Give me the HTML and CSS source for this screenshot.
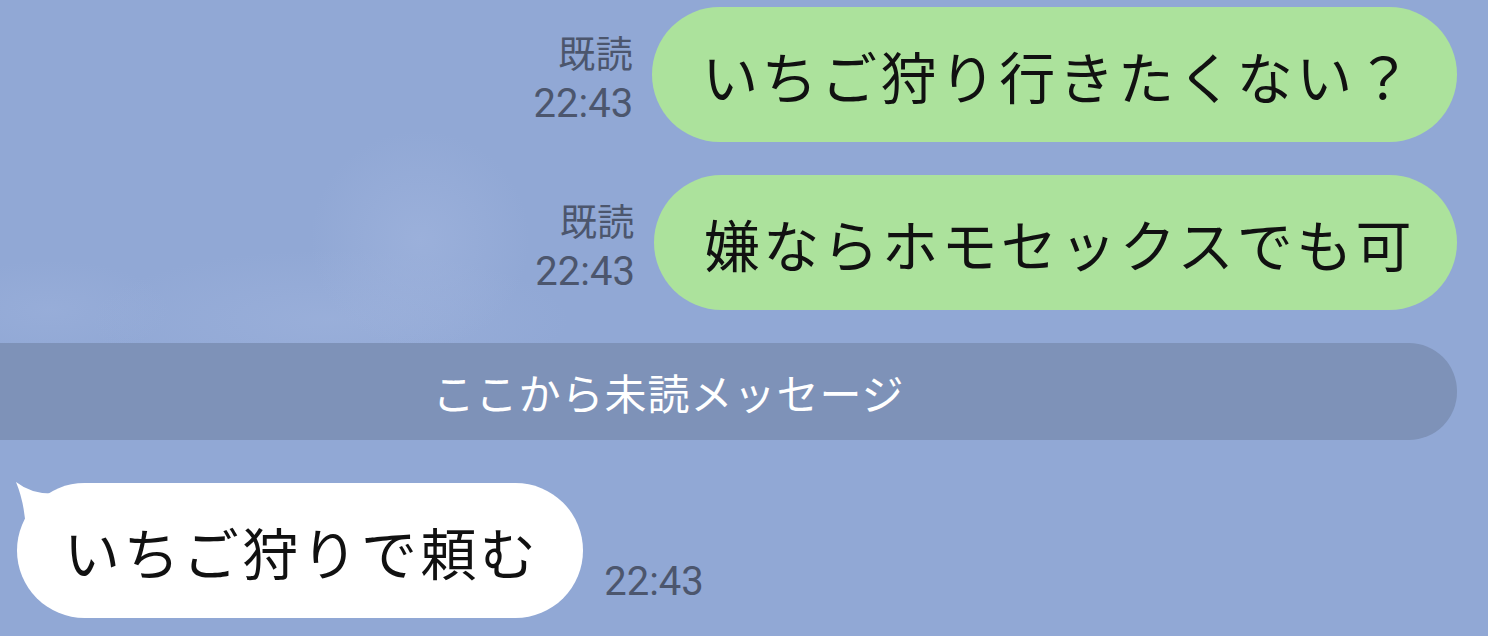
FILE: index.html
```html
<!DOCTYPE html>
<html lang="ja">
<head>
    <meta charset="UTF-8">
    <meta name="viewport" content="width=device-width, initial-scale=1.0">
    <title>トーク</title>
    <link rel="stylesheet" href="styles.css">
</head>
<body>
    <div class="chat">
        <div class="row sent">
            <div class="meta">
                <span class="read">既読</span>
                <span class="time">22:43</span>
            </div>
            <div class="bubble green">いちご狩り行きたくない？</div>
        </div>

        <div class="row sent">
            <div class="meta">
                <span class="read">既読</span>
                <span class="time">22:43</span>
            </div>
            <div class="bubble green">嫌ならホモセックスでも可</div>
        </div>

        <div class="unread">ここから未読メッセージ</div>

        <div class="row recv">
            <div class="bubble white">
                <svg class="tail" width="50" height="50" viewBox="0 0 50 50">
                    <path d="M0 0 Q18 14 44 11 L44 50 L10 50 Q9 22 0 0 Z" fill="#fff"/>
                </svg>
                いちご狩りで頼む
            </div>
            <span class="time">22:43</span>
        </div>
    </div>
</body>
</html>
```

FILE: styles.css
```css
* {
    box-sizing: border-box;
}
body {
    margin: 0;
    height: 636px;
    overflow: hidden;
    font-family: "Noto Sans CJK JP", "Noto Sans", sans-serif;
    background-color: #91a8d5;
    background-image:
        radial-gradient(ellipse 110px 110px at 420px 240px, rgba(165, 184, 224, .5), rgba(165, 184, 224, 0)),
        radial-gradient(ellipse 240px 70px at 330px 320px, rgba(165, 184, 224, .4), rgba(165, 184, 224, 0)),
        radial-gradient(ellipse 120px 50px at 50px 310px, rgba(165, 184, 224, .3), rgba(165, 184, 224, 0));
}
.chat {
    display: flex;
    flex-direction: column;
    gap: 33px;
    padding-top: 7px;
}
.row {
    display: flex;
    align-items: flex-end;
}
.sent {
    justify-content: flex-end;
    padding-right: 31px;
    gap: 19px;
}
.recv {
    padding-left: 17px;
    gap: 21px;
    margin-top: 10px;
}
.meta {
    display: flex;
    flex-direction: column;
    align-items: flex-end;
    padding-bottom: 18px;
    color: #4c566d;
}
.read {
    font-size: 37px;
    line-height: 36px;
    margin-bottom: 14px;
    letter-spacing: 0.5px;
}
.time {
    font-family: Roboto, "Liberation Sans", sans-serif;
    font-size: 40px;
    line-height: 40px;
    color: #4c566d;
}
.recv .time {
    padding-bottom: 16px;
}
.bubble {
    position: relative;
    height: 135px;
    display: flex;
    align-items: center;
    padding: 0 42px 0 50px;
    border-radius: 68px;
    font-size: 56px;
    letter-spacing: 3.4px;
    color: #111;
    white-space: nowrap;
}
.green {
    background: #ace29c;
}
.white {
    background: #fff;
    padding: 0 44px 0 47px;
}
.tail {
    position: absolute;
    left: -1px;
    top: -1px;
}
.unread {
    height: 97px;
    margin-right: 31px;
    border-radius: 0 48px 48px 0;
    background: #7e92b8;
    color: #fff;
    font-size: 42px;
    letter-spacing: 1px;
    display: flex;
    align-items: center;
    justify-content: center;
    padding-right: 120px;
}
```
